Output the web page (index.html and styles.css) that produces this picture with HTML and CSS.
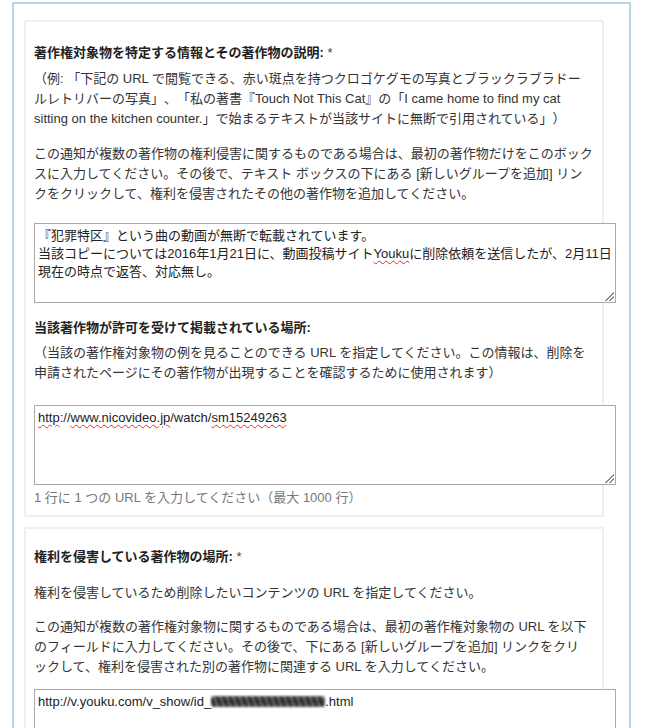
FILE: index.html
```html
<!DOCTYPE html>
<html lang="ja">
<head>
<meta charset="utf-8">
<title>著作権侵害の通知</title>
<link rel="stylesheet" href="styles.css">
</head>
<body>
<div class="frame">
  <section class="card card-first">
    <h3 class="label">著作権対象物を特定する情報とその著作物の説明: <span class="req">*</span></h3>
    <p class="text gap-xs">（例: 「下記の URL で閲覧できる、赤い斑点を持つクロゴケグモの写真とブラックラブラドー<br>ルレトリバーの写真」、「私の著書『Touch Not This Cat』の「I came home to find my cat<br>sitting on the kitchen counter.」で始まるテキストが当該サイトに無断で引用されている」）</p>
    <p class="text gap-m">この通知が複数の著作物の権利侵害に関するものである場合は、最初の著作物だけをこのボック<br>スに入力してください。その後で、テキスト ボックスの下にある [新しいグループを追加] リン<br>クをクリックして、権利を侵害されたその他の著作物を追加してください。</p>
    <div class="field gap-l">『犯罪特区』という曲の動画が無断で転載されています。<br>当該コピーについては2016年1月21日に、動画投稿サイト<span class="spell">Youku</span>に削除依頼を送信したが、2月11日<br>現在の時点で返答、対応無し。</div>
    <h3 class="label gap-m">当該著作物が許可を受けて掲載されている場所:</h3>
    <p class="text gap-xxs">（当該の著作権対象物の例を見ることのできる URL を指定してください。この情報は、削除を<br>申請されたページにその著作物が出現することを確認するために使用されます）</p>
    <div class="field gap-xl"><span class="spell">http</span>://<span class="spell">www.nicovideo.jp</span>/watch/<span class="spell">sm15249263</span></div>
    <p class="hint">1 行に 1 つの URL を入力してください（最大 1000 行）</p>
  </section>
  <section class="card card-second">
    <h3 class="label">権利を侵害している著作物の場所: <span class="req">*</span></h3>
    <p class="text gap-n">権利を侵害しているため削除したいコンテンツの URL を指定してください。</p>
    <p class="text gap-m2">この通知が複数の著作権対象物に関するものである場合は、最初の著作権対象物の URL を以下<br>のフィールドに入力してください。その後で、下にある [新しいグループを追加] リンクをクリ<br>ックして、権利を侵害された別の著作物に関連する URL を入力してください。</p>
    <div class="field gap-t">http://v.youku.com/v_show/id_<span class="redact"></span>.html</div>
  </section>
</div>
</body>
</html>
```
FILE: styles.css
```css
html, body {
  margin: 0;
  padding: 0;
  background: #ffffff;
}

body {
  font-family: "Liberation Sans", Arial, "Noto Sans CJK JP", sans-serif;
  font-size: 13px;
  line-height: 20px;
  color: #333333;
  text-spacing-trim: space-all;
}

.frame {
  margin: 2px 18px 0 12px;
  border: 2px solid #b9d6e3;
  border-bottom: 0;
  padding: 16px 0 40px 10px;
}

.card {
  width: 580px;
  box-sizing: border-box;
  border: 2px solid #efefef;
  border-radius: 2px;
  padding: 21px 0 7px 8px;
  background: #ffffff;
}

.card-second {
  margin-top: 10px;
  padding-top: 18px;
}

.label {
  margin: 0;
  font-size: 13px;
  line-height: 20px;
  font-weight: bold;
  color: #222222;
  white-space: nowrap;
}

.req {
  font-weight: normal;
  color: #444444;
}

.text {
  margin: 0;
  white-space: nowrap;
  color: #333333;
}

.gap-xxs { margin-top: 5px; }
.gap-xs { margin-top: 6px; }
.gap-m { margin-top: 15px; }
.gap-n { margin-top: 16px; }
.gap-m2 { margin-top: 14px; }
.gap-t { margin-top: 12px; }
.gap-l { margin-top: 19px; }
.gap-xl { margin-top: 22px; }

.field {
  position: relative;
  box-sizing: border-box;
  width: 582px;
  height: 80px;
  border: 1px solid #a9a9a9;
  background: #ffffff;
  padding: 3px 3px;
  line-height: 18px;
  color: #222222;
  white-space: nowrap;
}

.field::after {
  content: "";
  position: absolute;
  right: 1px;
  bottom: 1px;
  width: 9px;
  height: 9px;
  background: linear-gradient(135deg,
    transparent 0, transparent 48%,
    #8a8a8a 48%, #8a8a8a 56%,
    transparent 56%, transparent 72%,
    #8a8a8a 72%, #8a8a8a 80%,
    transparent 80%);
}

.spell {
  text-decoration: underline wavy #e0312b;
  text-decoration-thickness: 1px;
  text-underline-offset: 2px;
}

.redact {
  display: inline-block;
  width: 114px;
  height: 11px;
  vertical-align: -1px;
  background:
    repeating-linear-gradient(70deg, rgba(255,255,255,0.35) 0, rgba(255,255,255,0) 2px, rgba(0,0,0,0.3) 4px, rgba(255,255,255,0.2) 6px),
    linear-gradient(180deg, #555 0, #2a2a2a 50%, #555 100%);
  border-radius: 3px;
  filter: blur(0.9px);
}

.hint {
  margin: 3px 0 0 0;
  color: #777777;
  white-space: nowrap;
}
```
